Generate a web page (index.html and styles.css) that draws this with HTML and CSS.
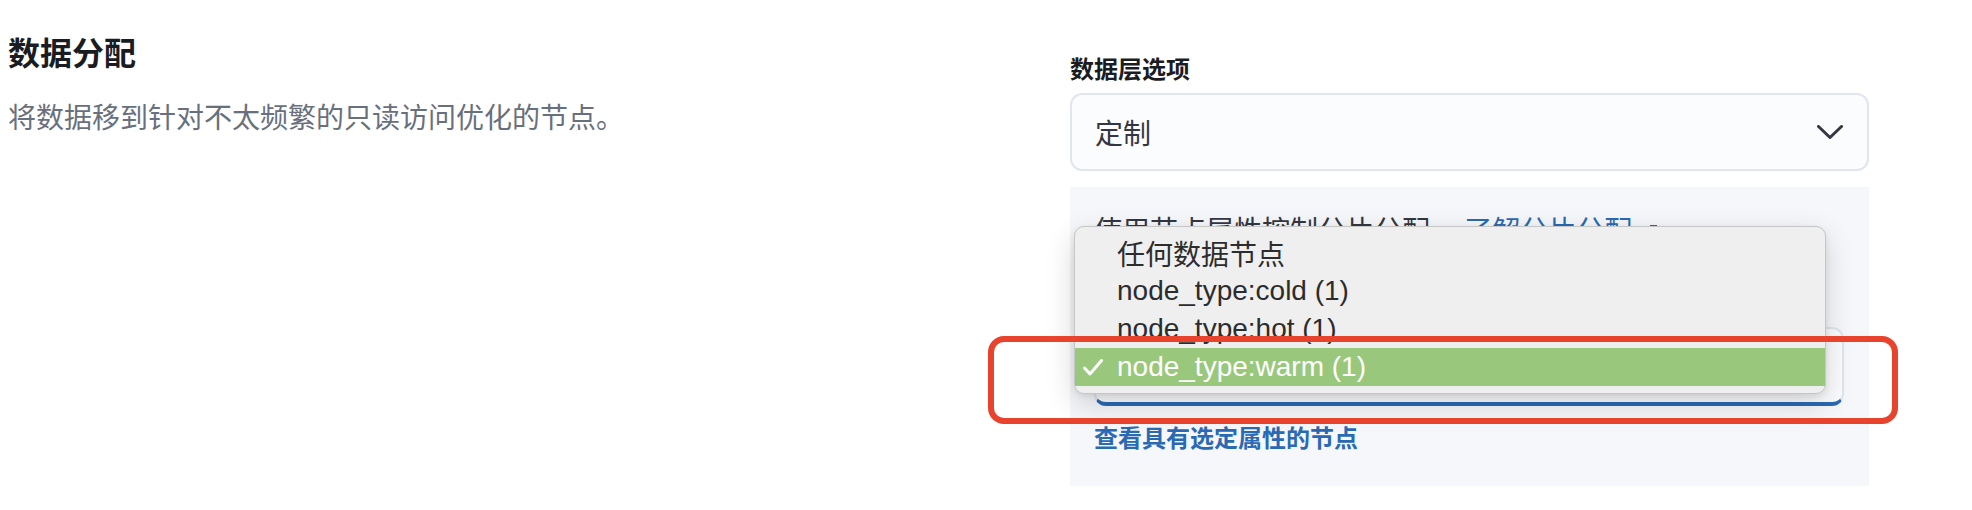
FILE: index.html
```html
<!DOCTYPE html>
<html lang="zh-CN">
<head>
<meta charset="utf-8">
<title>数据分配</title>
<link rel="stylesheet" href="styles.css">
</head>
<body>
<div class="page">
  <section class="row">
    <div class="intro">
      <h3 class="title">数据分配</h3>
      <p class="desc">将数据移到针对不太频繁的只读访问优化的节点。</p>
    </div>
    <div class="field">
      <label class="label">数据层选项</label>
      <div class="select">
        <span>定制</span>
        <svg class="chevron" width="26" height="14" viewBox="0 0 26 14"><polyline points="1.5,1.5 13,12.5 24.5,1.5" fill="none" stroke="#343741" stroke-width="3" stroke-linecap="round" stroke-linejoin="round"/></svg>
      </div>
      <div class="panel">
        <p class="help">使用节点属性控制分片分配。 <a class="link">了解分片分配 <svg width="20" height="20" viewBox="0 0 20 20"><path d="M8 4H4v12h12v-4M11 3h6v6M17 3l-8 8" fill="none" stroke="#2a69b3" stroke-width="2"/></svg></a></p>
        <label class="sublabel">选择节点属性</label>
        <div class="combo"></div>
        <a class="nodes-link">查看具有选定属性的节点</a>
        <div class="menu">
          <div class="opt"><span class="check"></span><span>任何数据节点</span></div>
          <div class="opt"><span class="check"></span><span>node_type:cold (1)</span></div>
          <div class="opt"><span class="check"></span><span>node_type:hot (1)</span></div>
          <div class="opt selected"><span class="check"><svg width="20" height="17" viewBox="0 0 20 17"><polyline points="1.5,9 7,15 18.5,1.5" fill="none" stroke="#ffffff" stroke-width="3" stroke-linecap="round" stroke-linejoin="round"/></svg></span><span>node_type:warm (1)</span></div>
        </div>
      </div>
    </div>
  </section>
  <div class="annot"></div>
</div>
</body>
</html>
```

FILE: styles.css
```css
html, body {
  margin: 0;
  padding: 0;
  background: #ffffff;
}
body {
  font-family: "Noto Sans CJK SC", "Liberation Sans", sans-serif;
  color: #343741;
}
.page {
  position: relative;
  width: 1972px;
  height: 510px;
  overflow: hidden;
}
.row {
  display: flex;
  align-items: flex-start;
  padding: 0 103px 0 8px;
}
.intro {
  flex: 1;
  padding-top: 31px;
}
.title {
  margin: 0;
  font-size: 32px;
  line-height: 40px;
  font-weight: 700;
  color: #1a1c21;
}
.desc {
  margin: 25px 0 0;
  font-size: 28px;
  line-height: 40px;
  color: #69707d;
}
.field {
  width: 799px;
  padding-top: 50px;
}
.label {
  display: block;
  font-size: 24px;
  line-height: 36px;
  font-weight: 700;
  color: #1a1c21;
}
.select {
  margin-top: 7px;
  height: 78px;
  box-sizing: border-box;
  border: 2px solid #e1e5ee;
  border-radius: 12px;
  background: #fbfcfd;
  display: flex;
  align-items: center;
  justify-content: space-between;
  padding: 0 24px 0 23px;
  font-size: 28px;
  color: #343741;
}
.chevron {
  display: block;
}
.panel {
  position: relative;
  margin-top: 16px;
  background: #f5f7fa;
  padding: 22px 25px 31px 24px;
}
.help {
  margin: 0;
  font-size: 28px;
  line-height: 40px;
  color: #343741;
}
.link {
  color: #2a69b3;
}
.link svg {
  vertical-align: -2px;
}
.sublabel {
  display: block;
  margin-top: 34px;
  font-size: 24px;
  line-height: 36px;
  font-weight: 700;
  color: #1a1c21;
}
.combo {
  margin-top: 8px;
  height: 79px;
  box-sizing: border-box;
  border: 2px solid #e1e5ee;
  border-bottom: 4px solid #2a69b3;
  border-radius: 12px;
  background: #fbfcfd;
}
.nodes-link {
  display: block;
  margin-top: 13px;
  font-size: 24px;
  line-height: 36px;
  font-weight: 700;
  color: #2a69b3;
}
.menu {
  position: absolute;
  left: 4px;
  top: 39px;
  width: 752px;
  box-sizing: border-box;
  padding: 7px 0;
  background: #efefef;
  border: 1px solid #c6c6c6;
  border-radius: 10px;
  box-shadow: 0 10px 30px rgba(0, 0, 0, 0.16), 0 2px 6px rgba(0, 0, 0, 0.08);
  font-family: "Liberation Sans", "Noto Sans CJK SC", sans-serif;
  font-size: 28px;
  color: #2c2c2c;
}
.opt {
  display: flex;
  align-items: center;
  height: 38px;
}
.check {
  width: 42px;
  box-sizing: border-box;
  padding-left: 8px;
  display: flex;
  align-items: center;
}
.check svg {
  display: block;
}
.opt.selected {
  background: #99c87d;
  color: #ffffff;
}
.annot {
  position: absolute;
  left: 988px;
  top: 336px;
  width: 910px;
  height: 88px;
  box-sizing: border-box;
  border: 6px solid #e8432d;
  border-radius: 16px;
}
```
